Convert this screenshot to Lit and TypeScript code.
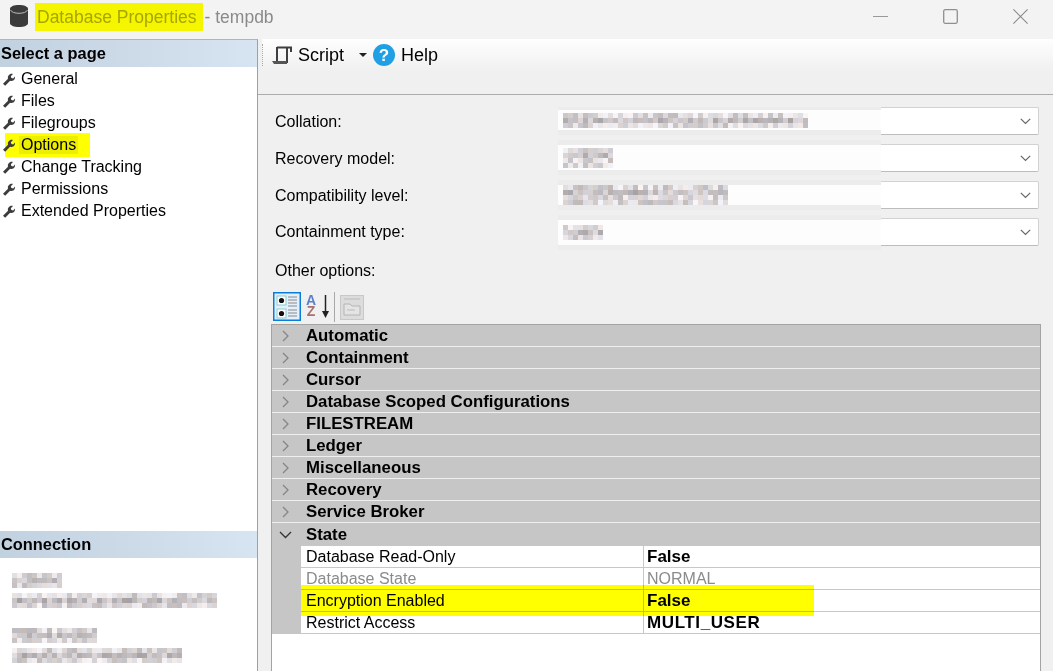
import { LitElement, css, html, svg } from 'lit'
import { customElement } from 'lit/decorators.js'

const pages = ['General', 'Files', 'Filegroups', 'Options', 'Change Tracking', 'Permissions', 'Extended Properties']
const groups = ['Automatic', 'Containment', 'Cursor', 'Database Scoped Configurations', 'FILESTREAM', 'Ledger', 'Miscellaneous', 'Recovery', 'Service Broker']
const stateRows = [
  { name: 'Database Read-Only', value: 'False', cls: '' },
  { name: 'Database State', value: 'NORMAL', cls: 'off' },
  { name: 'Encryption Enabled', value: 'False', cls: '' },
  { name: 'Restrict Access', value: 'MULTI_USER', cls: 'wide' },
]
// top/height: grey smear of the redaction, relative to the combo; inner: white part inside it
const combos = [
  { label: 'Collation:', w: 245, rows: 3, top: 0, h: 28, innerTop: 3, innerH: 20, cls: '' },
  { label: 'Recovery model:', w: 50, rows: 4, top: -4, h: 35, innerTop: 5, innerH: 25, cls: '' },
  { label: 'Compatibility level:', w: 165, rows: 4, top: -1, h: 30, innerTop: 5, innerH: 20, cls: '' },
  { label: 'Containment type:', w: 40, rows: 3, top: -3, h: 35, innerTop: 5, innerH: 25, cls: 'up' },
]

// redacted text in the reference is a pixel mosaic, so draw it as one
function mosaic(w: number, rows: number, seed: number) {
  const cell = 5
  const cells = []
  let s = seed
  for (let y = 0; y < rows; y++) {
    const base = y === 1 ? 160 : 185
    for (let x = 0; x < Math.ceil(w / cell); x++) {
      s = (s * 9301 + 49297) % 233280
      const r = s / 233280
      const g = Math.round(base + r * 60)
      const tint = (s % 3) * 4
      cells.push(svg`<rect x=${x * cell} y=${y * cell} width=${cell} height=${cell} fill=${`rgb(${g + tint},${g},${g + 6 - tint})`}></rect>`)
    }
  }
  return html`<svg class="mosaic" width=${w} height=${rows * cell}>${cells}</svg>`
}

const wrench = html`<svg class="wrench" width="13" height="13" viewBox="0 0 13 13"><path d="M1 10.800 6 5.800C5.500 3.900 6.200 2.100 7.900 1.200 9 .7 10.100.7 11 1L8.800 3.200 9.400 5 11.200 5.500 13 3.400C13.300 5.300 12.500 6.900 11.100 7.600 10 8.100 9 8 8.100 7.700L3.200 12.800Z" fill="#3c3c3c"/></svg>`
const chevRight = html`<svg width="8" height="12" viewBox="0 0 8 12"><path d="M1 1l5 5-5 5" fill="none" stroke="#858585" stroke-width="1.300"/></svg>`
const chevDown = html`<svg width="13" height="8" viewBox="0 0 13 8"><path d="M1 1l5.500 5.500L12 1" fill="none" stroke="#333" stroke-width="1.300"/></svg>`
const comboArrow = html`<svg width="11" height="7" viewBox="0 0 11 7"><path d="M.8.8l4.700 4.700L10.200.8" fill="none" stroke="#666" stroke-width="1.200"/></svg>`

@customElement('app-root')
export class AppRoot extends LitElement {
  static styles = css`
    :host {
      display: block;
      width: 1053px;
      height: 671px;
      overflow: hidden;
      background: #f0f0f0;
      font-family: "Liberation Sans", Arial, sans-serif;
      font-size: 16px;
      color: #000;
    }
    .wrap { position: relative; height: 671px; overflow: hidden; }
    .title {
      height: 39px;
      box-sizing: border-box;
      display: flex;
      align-items: center;
      background: #f3f3f3;
      padding: 0 0 5px 10px;
      font-size: 17.500px;
      color: #8a8a8a;
    }
    .title .db { margin: -2px 7px 0 0; }
    .mark { background: #f5f500; color: #a6a600; padding: 0 6px 0 2px; height: 28px; line-height: 28px; margin-right: 2px; }
    .controls { margin: -2px 0 0 auto; display: flex; align-items: center; gap: 55px; padding-right: 25px; }
    .main { display: flex; height: 632px; }
    .left {
      width: 257px;
      background: #fff;
      border-right: 1px solid #a0a0a0;
      border-top: 1px solid #b4b4b4;
      display: flex;
      flex-direction: column;
    }
    .band {
      height: 27px;
      line-height: 27px;
      background: linear-gradient(90deg, #c2d1e0, #d7e4f1);
      font-weight: bold;
      font-size: 16.400px;
      padding-left: 1px;
      flex: none;
    }
    .pages { list-style: none; margin: 0; padding: 1px 0 0; height: 464px; box-sizing: border-box; flex: none; }
    .pages li { height: 22px; display: flex; align-items: center; padding-left: 2px; gap: 6px; position: relative; }
    .pages li.sel::before {
      content: '';
      position: absolute;
      left: 5px; top: -1px; width: 85px; height: 24px;
      background: #ffff00;
    }
    .pages li > * { position: relative; }
    .pages li.sel span { background: #eeee00; margin-left: -2px; padding: 0 2px; }
    .conn { padding: 15px 0 0 12px; display: flex; flex-direction: column; }
    .mosaic { display: block; }
    .conn .line { margin-bottom: 5px; }
    .conn .gap { margin-bottom: 20px; }
    .right { flex: 1; min-width: 0; }
    .toolbar {
      height: 55px;
      border-bottom: 1px solid #ababab;
      padding-left: 4px;
    }
    .tools {
      height: 32px;
      display: flex;
      align-items: center;
      background: linear-gradient(#fefefe, #f0f0f0);
      font-size: 18px;
    }
    .grip { width: 0; height: 22px; border-left: 1px dotted #aaa; margin-right: 9px; }
    .script { margin: 0 15px 0 6px; }
    .caret { width: 0; height: 0; border: 4px solid transparent; border-top-color: #222; border-bottom: 0; margin-right: 6px; }
    .help { margin-left: 6px; }
    .form { padding: 12px 14px 0 17px; }
    .row { display: flex; align-items: center; height: 28px; margin-bottom: 9px; }
    .row label { width: 283px; flex: none; padding-top: 2px; }
    .row.up label { padding-top: 0; }
    .combo {
      flex: 1;
      height: 28px;
      border: 1px solid #d2d2d2;
      border-bottom-color: #bdbdbd;
      border-radius: 2px;
      background: #fff;
      display: flex;
      align-items: center;
      justify-content: flex-end;
      padding-right: 7px;
      box-sizing: border-box;
      position: relative;
    }
    .smear {
      position: absolute;
      left: -1px;
      width: 323px;
      background: #ececec;
    }
    .smear .inner {
      position: absolute;
      left: 0; right: 0;
      background: #fdfdfd;
      padding-left: 5px;
      display: flex;
      align-items: center;
    }
    .other { margin-top: 16px; }
    .gridbar { display: flex; align-items: flex-start; height: 32px; margin: 12px 0 0 15px; }
    .az { width: 14px; margin: 3px 0 0 3px; font-size: 14px; font-weight: bold; line-height: 11px; text-align: center; color: #5a80cc; }
    .az span { color: #a87070; }
    .arrow { margin: 3px 0 0 3px; }
    .sep { width: 1px; height: 30px; background: #a8a8a8; margin: 0 5px 0 4px; }
    .gray { margin-top: 3px; }
    .grid {
      margin: 0 12px 0 13px;
      border: 1px solid #a3a3a3;
      border-bottom: 0;
      background: #fff;
      height: 360px;
      box-sizing: border-box;
    }
    .cat {
      height: 22px;
      padding-top: 1px;
      background: #c6c6c6;
      border-bottom: 1px solid #efefef;
      box-sizing: border-box;
      display: flex;
      align-items: center;
      font-weight: bold;
      font-size: 16.800px;
    }
    .cat.open { height: 23px; border-bottom-color: #c6c6c6; }
    .cat .ico { width: 34px; padding-left: 10px; box-sizing: border-box; display: flex; align-items: center; flex: none; }
    .cat.open .ico { padding-left: 7px; }
    .prop { display: flex; height: 22px; background: #c6c6c6; }
    .prop .n, .prop .v { background: #fff; border-bottom: 1px solid #c8c8c8; box-sizing: border-box; line-height: 21px; }
    .prop .n { width: 343px; margin-left: 29px; padding-left: 5px; border-right: 1px solid #c8c8c8; flex: none; }
    .prop .v { flex: 1; padding-left: 3px; font-weight: bold; font-size: 17px; }
    .prop.wide .v { letter-spacing: .6px; }
    .prop.off .n, .prop.off .v { color: #8b8b8b; font-weight: normal; font-size: 16px; }
    .hl {
      position: absolute;
      left: 301px; top: 585px;
      width: 513px; height: 31px;
      background: #ffff00;
      mix-blend-mode: multiply;
    }
  `

  render() {
    return html`
      <div class="wrap">
        <div class="title">
          <svg class="db" width="18" height="22" viewBox="0 0 18 22">
            <path d="M0 4C0 1.500 4 0 9 0s9 1.500 9 4v14c0 2.500-4 4-9 4s-9-1.500-9-4Z" fill="#3b3b3b"/>
            <path d="M.5 5c1 2.300 4.500 3.300 8.500 3.300S16.500 7.300 17.500 5" fill="none" stroke="#bbb" stroke-width="1"/>
          </svg>
          <span class="mark">Database Properties</span><span>- tempdb</span>
          <div class="controls">
            <svg width="15" height="15" viewBox="0 0 15 15"><path d="M0 7.500h15" stroke="#999" stroke-width="1"/></svg>
            <svg width="15" height="15" viewBox="0 0 15 15"><rect x=".7" y=".7" width="13.600" height="13.600" rx="1.500" fill="none" stroke="#8f8f8f" stroke-width="1.300"/></svg>
            <svg width="15" height="15" viewBox="0 0 15 15"><path d="M.4.4l14.200 14.200M14.600.4.4 14.600" stroke="#8a8a8a" stroke-width="1.100"/></svg>
          </div>
        </div>
        <div class="main">
          <div class="left">
            <div class="band">Select a page</div>
            <ul class="pages">
              ${pages.map((p) => html`<li class=${p === 'Options' ? 'sel' : ''}>${wrench}<span>${p}</span></li>`)}
            </ul>
            <div class="band">Connection</div>
            <div class="conn">
              <div class="line">${mosaic(50, 3, 11)}</div>
              <div class="gap">${mosaic(205, 3, 37)}</div>
              <div class="line">${mosaic(85, 3, 71)}</div>
              <div>${mosaic(170, 3, 93)}</div>
            </div>
          </div>
          <div class="right">
            <div class="toolbar">
              <div class="tools">
                <div class="grip"></div>
                <svg width="20" height="19" viewBox="0 0 20 19"><path d="M5 1.500h14V6M5 1v14M15 2v15" fill="none" stroke="#3f3f3f" stroke-width="2"/><path d="M0 15h15v3H2Z" fill="#555"/></svg>
                <span class="script">Script</span>
                <div class="caret"></div>
                <svg width="22" height="22" viewBox="0 0 22 22"><circle cx="11" cy="11" r="11" fill="#1f9fe4"/><text x="11" y="17" text-anchor="middle" font-family="Liberation Sans" font-weight="bold" font-size="17" fill="#fff">?</text></svg>
                <span class="help">Help</span>
              </div>
            </div>
            <div class="form">
              ${combos.map((c, i) => html`
                <div class="row ${c.cls}">
                  <label>${c.label}</label>
                  <div class="combo">
                    <div class="smear" style="top:${c.top - 1}px;height:${c.h}px">
                      <div class="inner" style="top:${c.innerTop}px;height:${c.innerH}px">${mosaic(c.w, c.rows, 17 * (i + 3))}</div>
                    </div>
                    ${comboArrow}
                  </div>
                </div>`)}
              <div class="other">Other options:</div>
            </div>
            <div class="gridbar">
              <svg width="28" height="29" viewBox="0 0 28 29">
                <rect x=".75" y=".75" width="26.500" height="27.500" fill="#e3f0fb" stroke="#0a7ddb" stroke-width="1.500"/>
                <rect x="4" y="4" width="9" height="9" fill="#fff" stroke="#8cc" /><circle cx="8.500" cy="8.500" r="2.600" fill="#111"/>
                <rect x="4" y="17" width="9" height="9" fill="#fff" stroke="#8cc" /><circle cx="8.500" cy="21.500" r="2.600" fill="#111"/>
                <path d="M15 5h9M15 8h9M15 11h9M15 14h9M15 18h9M15 21h9M15 24h9" stroke="#8a8a8a"/>
              </svg>
              <div class="az">A<br /><span>Z</span></div>
              <svg class="arrow" width="9" height="24" viewBox="0 0 9 24"><path d="M4.500 0v18" stroke="#222" stroke-width="1.500"/><path d="M1 16l3.500 7L8 16Z" fill="#222"/></svg>
              <div class="sep"></div>
              <svg class="gray" width="24" height="25" viewBox="0 0 24 25">
                <rect x=".5" y=".5" width="23" height="24" fill="#dcdcdc" stroke="#c8c8c8"/>
                <path d="M4 9h6l2 2h8v9H4Z" fill="#e4e4e4" stroke="#b4b4b4"/>
                <path d="M4 4h16M7 15h8" stroke="#bbb"/>
              </svg>
            </div>
            <div class="grid">
              ${groups.map((g) => html`<div class="cat"><div class="ico">${chevRight}</div>${g}</div>`)}
              <div class="cat open"><div class="ico">${chevDown}</div>State</div>
              ${stateRows.map((r) => html`<div class="prop ${r.cls}"><div class="n">${r.name}</div><div class="v">${r.value}</div></div>`)}
            </div>
          </div>
        </div>
        <div class="hl"></div>
      </div>
    `
  }
}

declare global {
  interface HTMLElementTagNameMap {
    'app-root': AppRoot
  }
}
